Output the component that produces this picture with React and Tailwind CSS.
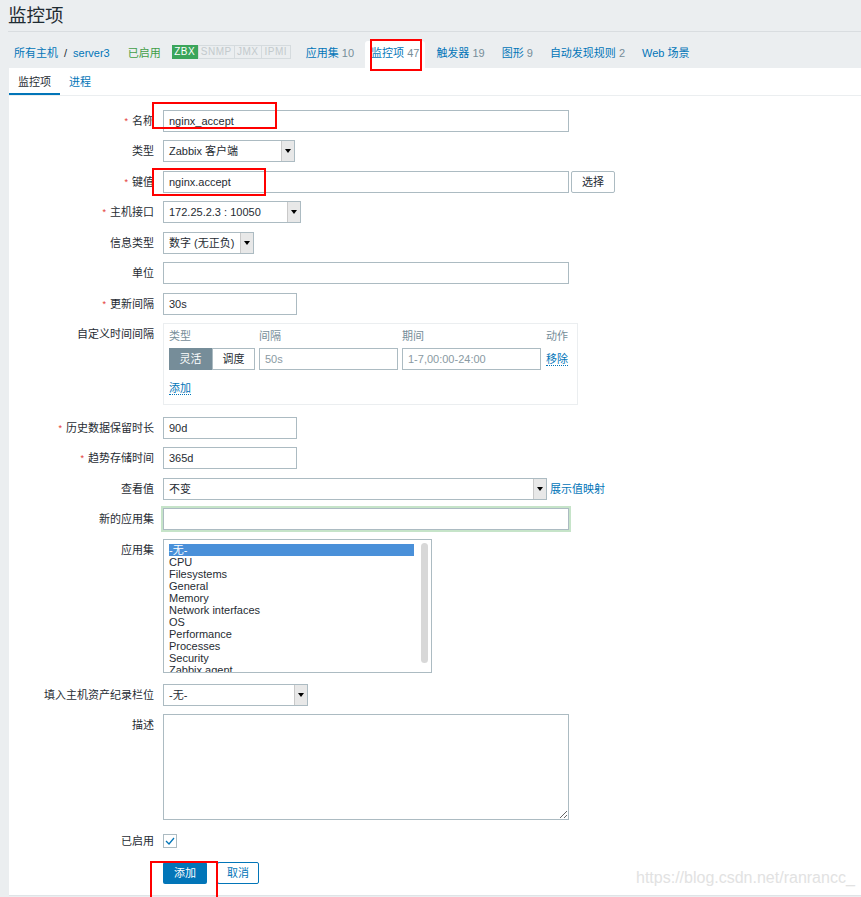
import React from "react";

const FONT = "font-['Liberation_Sans','Noto_Sans_CJK_SC',sans-serif]";

function Arrow() {
  return (
    <div className="w-[13px] self-stretch bg-[#e8e8e8] border-l border-[#c9c9c9] flex items-center justify-center">
      <div className="w-0 h-0 border-l-[3px] border-r-[3px] border-t-[4px] border-l-transparent border-r-transparent border-t-black" />
    </div>
  );
}

function Select({ w, value }) {
  return (
    <div className={`${w} h-[22px] border border-[#acbbc2] bg-white flex items-center`}>
      <div className="flex-1 pl-[5px] text-[#1f2c33] leading-[20px] whitespace-nowrap overflow-hidden">{value}</div>
      <Arrow />
    </div>
  );
}

function Input({ w, value, muted }) {
  return (
    <div className={`${w} h-[22px] border border-[#acbbc2] bg-white pl-[5px] leading-[20px] whitespace-nowrap overflow-hidden ${muted ? "text-[#8a9aa3]" : "text-[#1f2c33]"}`}>
      {value}
    </div>
  );
}

function Row({ label, req, children, className = "" }) {
  return (
    <div className={`flex items-start ${className}`}>
      <div className="w-[145px] mr-[9px] shrink-0 text-right h-[22px] leading-[22px] text-[#1f2c33] whitespace-nowrap">
        {req && <span className="text-[#e33734] text-[9px] mr-[4px] relative top-[-1px]">*</span>}
        {label}
      </div>
      {children}
    </div>
  );
}

const apps = [
  "-无-",
  "CPU",
  "Filesystems",
  "General",
  "Memory",
  "Network interfaces",
  "OS",
  "Performance",
  "Processes",
  "Security",
  "Zabbix agent",
];

export default function App() {
  return (
    <div className={`${FONT} text-[11px] w-[861px] h-[897px] bg-[#ebeef0] relative overflow-hidden`}>
      {/* Title */}
      <div className="ml-[8px] h-[32px] border-b border-[#d9dde0] flex items-center">
        <h1 className="text-[18.5px] text-[#1f2c33] leading-[24px] pt-[1px]">监控项</h1>
      </div>

      {/* Nav */}
      <div className="h-[36px] flex items-start pt-[9px] pl-[14px] text-[#0275b8]">
        <div className="flex items-start leading-[14px] pt-[5px]">
          <span>所有主机</span>
          <span className="ml-[6px] text-[#1f2c33]">/</span>
          <span className="ml-[6px]">server3</span>
          <span className="ml-[18px] text-[#429e47]">已启用</span>
        </div>
        <div className="ml-[11px] mt-[4px] flex h-[14px] text-[10px] leading-[12px] tracking-[0.5px]">
          <div className="w-[26px] bg-[#3ba55b] border border-[#3ba55b] text-white text-center">ZBX</div>
          <div className="w-[37px] border border-[#d5dbde] text-[#c3cacd] text-center">SNMP</div>
          <div className="w-[27px] border border-l-0 border-[#d5dbde] text-[#c3cacd] text-center">JMX</div>
          <div className="w-[29px] border border-l-0 border-[#d5dbde] text-[#c3cacd] text-center">IPMI</div>
        </div>
        <div className="ml-[9px] flex items-start gap-[5px] leading-[14px]">
          <div className="h-[27px] px-[6px] pt-[5px]">
            应用集 <span className="text-[#768d99]">10</span>
          </div>
          <div className="h-[27px] px-[6px] pt-[5px] bg-white rounded-t-[3px]">
            监控项 <span className="text-[#768d99]">47</span>
          </div>
          <div className="h-[27px] px-[6px] pt-[5px]">
            触发器 <span className="text-[#768d99]">19</span>
          </div>
          <div className="h-[27px] px-[6px] pt-[5px]">
            图形 <span className="text-[#768d99]">9</span>
          </div>
          <div className="h-[27px] px-[6px] pt-[5px]">
            自动发现规则 <span className="text-[#768d99]">2</span>
          </div>
          <div className="h-[27px] px-[6px] pt-[5px]">Web 场景</div>
        </div>
      </div>

      {/* Content */}
      <div className="ml-[9px] h-[828px] bg-white border-b border-[#dfe4e7]">
        {/* sub tabs */}
        <div className="h-[28px] border-b border-[#ebeef0] flex items-end">
          <div className="h-[27px] w-[51px] pl-[9px] pt-[7px] leading-[14px] text-[#1f2c33] border-b-2 border-[#0275b8]">监控项</div>
          <div className="h-[27px] pl-[9px] pt-[7px] leading-[14px] text-[#0275b8]">进程</div>
        </div>

        {/* form */}
        <div className="pt-[13.5px] flex flex-col gap-[8.5px]">
          <Row label="名称" req>
            <Input w="w-[406px]" value="nginx_accept" />
          </Row>
          <Row label="类型">
            <Select w="w-[132px]" value="Zabbix 客户端" />
          </Row>
          <Row label="键值" req>
            <Input w="w-[406px]" value="nginx.accept" />
            <div className="ml-[2px] w-[44px] h-[22px] border border-[#acbbc2] rounded-[2px] text-center leading-[20px] text-[#1f2c33]">选择</div>
          </Row>
          <Row label="主机接口" req>
            <Select w="w-[138px]" value="172.25.2.3 : 10050" />
          </Row>
          <Row label="信息类型">
            <Select w="w-[91px]" value="数字 (无正负)" />
          </Row>
          <Row label="单位">
            <Input w="w-[406px]" value="" />
          </Row>
          <Row label="更新间隔" req>
            <Input w="w-[134px]" value="30s" />
          </Row>
          <Row label="自定义时间间隔">
            <div className="w-[415px] h-[82px] border border-[#ebeef0] pl-[5px] pt-[5px]">
              <div className="grid grid-cols-[86px_139px_139px_auto] gap-x-[4px] leading-[14px] text-[#768d99]">
                <div>类型</div>
                <div>间隔</div>
                <div>期间</div>
                <div className="ml-[1px]">动作</div>
              </div>
              <div className="mt-[5px] grid grid-cols-[86px_139px_139px_auto] gap-x-[4px] items-center">
                <div className="flex h-[22px]">
                  <div className="w-[43px] bg-[#768d99] text-white text-center leading-[22px]">灵活</div>
                  <div className="w-[43px] border border-[#acbbc2] text-[#1f2c33] text-center leading-[20px]">调度</div>
                </div>
                <Input w="w-[139px]" value="50s" muted />
                <Input w="w-[139px]" value="1-7,00:00-24:00" muted />
                <div className="ml-[1px] text-[#0275b8] leading-[14px]">
                  <span className="border-b border-dotted border-[#0275b8]">移除</span>
                </div>
              </div>
              <div className="mt-[11px] text-[#0275b8] leading-[14px]">
                <span className="border-b border-dotted border-[#0275b8]">添加</span>
              </div>
            </div>
          </Row>
          <Row label="历史数据保留时长" req className="mt-[3px]">
            <Input w="w-[134px]" value="90d" />
          </Row>
          <Row label="趋势存储时间" req>
            <Input w="w-[134px]" value="365d" />
          </Row>
          <Row label="查看值">
            <Select w="w-[384px]" value="不变" />
            <span className="ml-[3px] leading-[22px] text-[#0275b8]">展示值映射</span>
          </Row>
          <Row label="新的应用集">
            <div className="w-[406px] h-[22px] border border-[#acbbc2] bg-white ring-2 ring-[#c6e4c9]" />
          </Row>
          <Row label="应用集">
            <div className="w-[269px] h-[134px] border border-[#acbbc2] bg-white relative overflow-hidden">
              <div className="pl-[5px] pt-[4px] w-[250px] text-[#1f2c33] leading-[12.1px]">
                {apps.map((a, i) => (
                  <div key={a} className={i === 0 ? "bg-[#4a90d9] text-white" : ""}>
                    {a}
                  </div>
                ))}
              </div>
              <div className="absolute left-[257px] top-[3px] w-[7px] h-[120px] rounded-full bg-[#d8d8d8]" />
            </div>
          </Row>
          <Row label="填入主机资产纪录栏位" className="mt-[2.5px]">
            <Select w="w-[145px]" value="-无-" />
          </Row>
          <Row label="描述">
            <textarea className="w-[406px] h-[106px] border border-[#acbbc2] bg-white block outline-none" defaultValue="" />
          </Row>
          <Row label="已启用" className="mt-[1px]">
            <div className="h-[22px] flex items-center">
              <div className="w-[14px] h-[14px] border border-[#acbbc2] flex items-center justify-center">
                <svg width="10" height="8" viewBox="0 0 10 8">
                  <path d="M1 4 L4 7 L9 1" fill="none" stroke="#0275b8" strokeWidth="1.3" />
                </svg>
              </div>
            </div>
          </Row>
          <div className="flex pl-[154px] mt-[1.5px]">
            <div className="w-[44px] h-[22px] bg-[#0275b8] text-white text-center leading-[22px] rounded-[2px]">添加</div>
            <div className="ml-[10px] w-[42px] h-[22px] border border-[#0275b8] text-[#0275b8] text-center leading-[20px] rounded-[2px]">取消</div>
          </div>
        </div>
      </div>

      {/* Watermark */}
      <div className="absolute left-[636px] top-[868px] text-[16px] leading-[20px] text-[#e2e2e2] font-['Liberation_Sans',sans-serif]">
        https://blog.csdn.net/ranrancc_
      </div>

      {/* Red annotation boxes */}
      <div className="absolute left-[152px] top-[102px] w-[125px] h-[27px] border-2 border-[#ff0000]" />
      <div className="absolute left-[152px] top-[168px] w-[114px] h-[28px] border-2 border-[#ff0000]" />
      <div className="absolute left-[370px] top-[39px] w-[52px] h-[32px] border-2 border-[#ff0000]" />
      <div className="absolute left-[150px] top-[861px] w-[68px] h-[50px] border-2 border-[#ff0000]" />
    </div>
  );
}
